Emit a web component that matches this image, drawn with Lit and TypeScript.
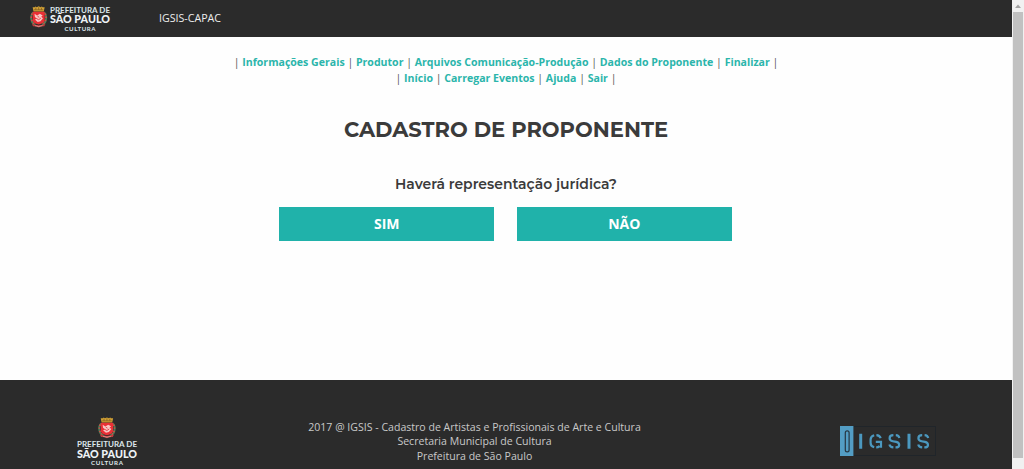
import { LitElement, html, css, svg } from "lit";
import { customElement, property } from "lit/decorators.js";

// Coat of arms, drawn on an 18 x 22 grid.
const crest = svg`
  <path d="M2.6 1h2.2l.8-.8L7 1l2-1 2 1 1.4-.8.8.8h2.2L14.4 5.4H3.6z" fill="#d2a235"/>
  <path d="M4 3.6h10M6 1.4v2M9 1v2.4M12 1.4v2" stroke="#76501e" stroke-width=".7"/>
  <path d="M3 6.2Q.2 9 1.2 13.5q.7 4 4.2 5.3M15 6.2q2.8 2.8 1.8 7.3-.7 4-4.2 5.3" fill="none" stroke="#458059" stroke-width="2"/>
  <path d="M1 8.2h1.6M.4 11.2h1.6M1 14.6h1.6M2.7 17.2h1.3M15.4 8.2H17M16 11.2h1.6M15.4 14.6H17M14 17.2h1.3" stroke="#e04343" stroke-width="1.5"/>
  <path d="M2.6 5.6h12.8v8q0 3.6-6.4 5-6.4-1.4-6.4-5z" fill="#ea2f35"/>
  <path d="M4.6 7.6l2.7 1.9 3-1.8 3 1.6-1.6 1.4 1.9 1.4-2.6 3.2-3 .6-3-2.4 2.3-.8-2.3-1.9z" fill="#f8c6c4"/>
  <path d="M6.8 12.5l2.2 1.2 2.4-1.7M7.8 10.2l1.8 1" stroke="#e0343a" stroke-width=".9" fill="none"/>
  <path d="M1.8 18q3.2.6 7.2 1.4 4-.8 7.2-1.4l-1.2 2.4Q12 20.2 9 21.6 6 20.2 3 20.4z" fill="#c23a3a"/>
  <path d="M5 19.7l4 .9 4-.9" stroke="#e4c9c0" stroke-width=".6" fill="none"/>`;

@customElement("city-logo")
class CityLogo extends LitElement {
  @property({ type: Boolean }) stacked = false;
  static styles = css`
    :host { display: block; }
    svg { display: block; }
    text { font-family: Lato, "Open Sans", sans-serif; font-weight: 900; fill: #eef3f6; }
    .light { font-weight: 700; fill: #dde6ea; }
  `;
  render() {
    return this.stacked
      ? html`<svg width="62" height="50" viewBox="0 0 62 50">
          <g transform="translate(22.2 0.4) scale(.97 .96)">${crest}</g>
          <text class="light" x="1" y="29.9" font-size="7.8" textLength="60" lengthAdjust="spacingAndGlyphs">PREFEITURA DE</text>
          <text x="1" y="40.7" font-size="10.8" textLength="60" lengthAdjust="spacingAndGlyphs">SÃO PAULO</text>
          <text class="light" x="15" y="48.2" font-size="6.2" textLength="32" lengthAdjust="spacing">CULTURA</text>
        </svg>`
      : html`<svg width="82" height="26" viewBox="0 0 82 26">
          <g transform="translate(.2 1.3) scale(.94 .98)">${crest}</g>
          <text class="light" x="20" y="7.6" font-size="7.6" textLength="60" lengthAdjust="spacingAndGlyphs">PREFEITURA DE</text>
          <text x="20" y="18.3" font-size="10.7" textLength="60" lengthAdjust="spacingAndGlyphs">SÃO PAULO</text>
          <text class="light" x="34.5" y="25.5" font-size="6.1" textLength="31" lengthAdjust="spacing">CULTURA</text>
        </svg>`;
  }
}

@customElement("igsis-logo")
class IgsisLogo extends LitElement {
  static styles = css`
    :host { display: block; }
    svg { display: block; }
  `;
  render() {
    return html`<svg width="96" height="30" viewBox="0 0 96 30" role="img" aria-label="IGSIS">
      <rect x=".5" y=".5" width="95" height="29" fill="none" stroke="#20252a"/>
      <rect width="13.4" height="30" fill="#539dc4"/>
      <rect x="5.3" y="4.8" width="3.8" height="21" rx="1.9" fill="none" stroke="#263743" stroke-width="1.2"/>
      <g fill="none" stroke="#4b98bf" stroke-width="2.2">
        <path d="M20.7 7.8v15M69 7.8v15" stroke-width="3"/>
        <path d="M34.2 9.2q-3.6 1-3.6 4.3v3.4q0 3.4 3.6 4.3M36.4 9.1q3.3.2 4.3 3M35.8 15.9H41v5.9M36.2 21.4q2 0 3.4-1.5"/>
        <path id="s" d="M53.4 9.2q-3.8.1-3.8 3 0 2.3 3.2 3l3.4.7q3 .7 3 3 0 2.5-3.7 2.5M55.8 9.2q3 .2 3.6 2.9M49.4 18.4q.7 2.8 4 3"/>
        <use href="#s" x="28.8"/>
      </g>
    </svg>`;
  }
}

@customElement("app-root")
class AppRoot extends LitElement {
  static styles = css`
    :host {
      display: flex;
      width: 1024px;
      height: 469px;
      overflow: hidden;
      background: #fefefe;
      font-family: "Open Sans", sans-serif;
      color: #555;
    }
    .page { width: 1012px; display: flex; flex-direction: column; }
    header {
      height: 37px;
      box-sizing: border-box;
      padding: 5px 0 0 30px;
      display: flex;
      background: #2b2b2b;
    }
    .brand { margin: 5px 0 0 47px; font-size: 10.65px; line-height: 16px; color: #eee; }
    main { flex: 1; display: flex; flex-direction: column; align-items: center; }
    nav { margin-top: 16.6px; text-align: center; font-size: 10.57px; line-height: 16.4px; white-space: nowrap; }
    a { color: #2bb5ab; font-weight: 700; text-decoration: none; }
    h1, h2 { margin: 0; font-family: Montserrat, Inter, sans-serif; font-weight: 700; color: #3b3b3b; white-space: nowrap; }
    h1 { margin-top: 30px; font-size: 21.05px; line-height: 27px; }
    h2 { margin-top: 30.5px; font-size: 13.95px; line-height: 20px; font-weight: 600; }
    .choices { margin-top: 13.5px; padding-right: 1px; display: flex; gap: 22.6px; }
    button {
      width: 215px; height: 34px; padding: 0; border: 0;
      background: #20b2aa; color: #fff;
      font: 700 14px/34px "Open Sans", sans-serif;
    }
    footer {
      height: 89px; box-sizing: border-box; padding: 37px 76px 0;
      display: grid; grid-template-columns: 62px 1fr 96px;
      background: #2b2b2b;
    }
    .credits { font-size: 10.57px; line-height: 14.3px; text-align: center; color: #c9c9c9; margin-top: 3px; padding-right: 29px; margin-right: 34px; margin-left: 34px; white-space: nowrap; }
    igsis-logo { margin-top: 9px; }
    .credits { margin-left: 35px; margin-right: 35px; }
    .scroll { width: 12px; box-sizing: border-box; padding: 0 1px; background: #f1f1f1; }
    .up { height: 12px; display: block; }
    .thumb { height: 446px; background: #c1c1c1; }
  `;

  private menu(items: string[]) {
    return html`<div>|${items.map((t) => html` <a>${t}</a> |`)}</div>`;
  }

  render() {
    return html`
      <div class="page">
        <header><city-logo></city-logo><div class="brand">IGSIS-CAPAC</div></header>
        <main>
          <nav>
            ${this.menu(["Informações Gerais", "Produtor", "Arquivos Comunicação-Produção", "Dados do Proponente", "Finalizar"])}
            ${this.menu(["Início", "Carregar Eventos", "Ajuda", "Sair"])}
          </nav>
          <h1>CADASTRO DE PROPONENTE</h1>
          <h2>Haverá representação jurídica?</h2>
          <div class="choices"><button>SIM</button><button>NÃO</button></div>
        </main>
        <footer>
          <city-logo stacked></city-logo>
          <div class="credits">
            2017 @ IGSIS - Cadastro de Artistas e Profissionais de Arte e Cultura<br />
            Secretaria Municipal de Cultura<br />
            Prefeitura de São Paulo
          </div>
          <igsis-logo></igsis-logo>
        </footer>
      </div>
      <div class="scroll">
        <svg class="up" width="10" height="12"><path d="M2 8l3-3.5L8 8z" fill="#a3a3a3"/></svg>
        <div class="thumb"></div>
      </div>`;
  }
}
